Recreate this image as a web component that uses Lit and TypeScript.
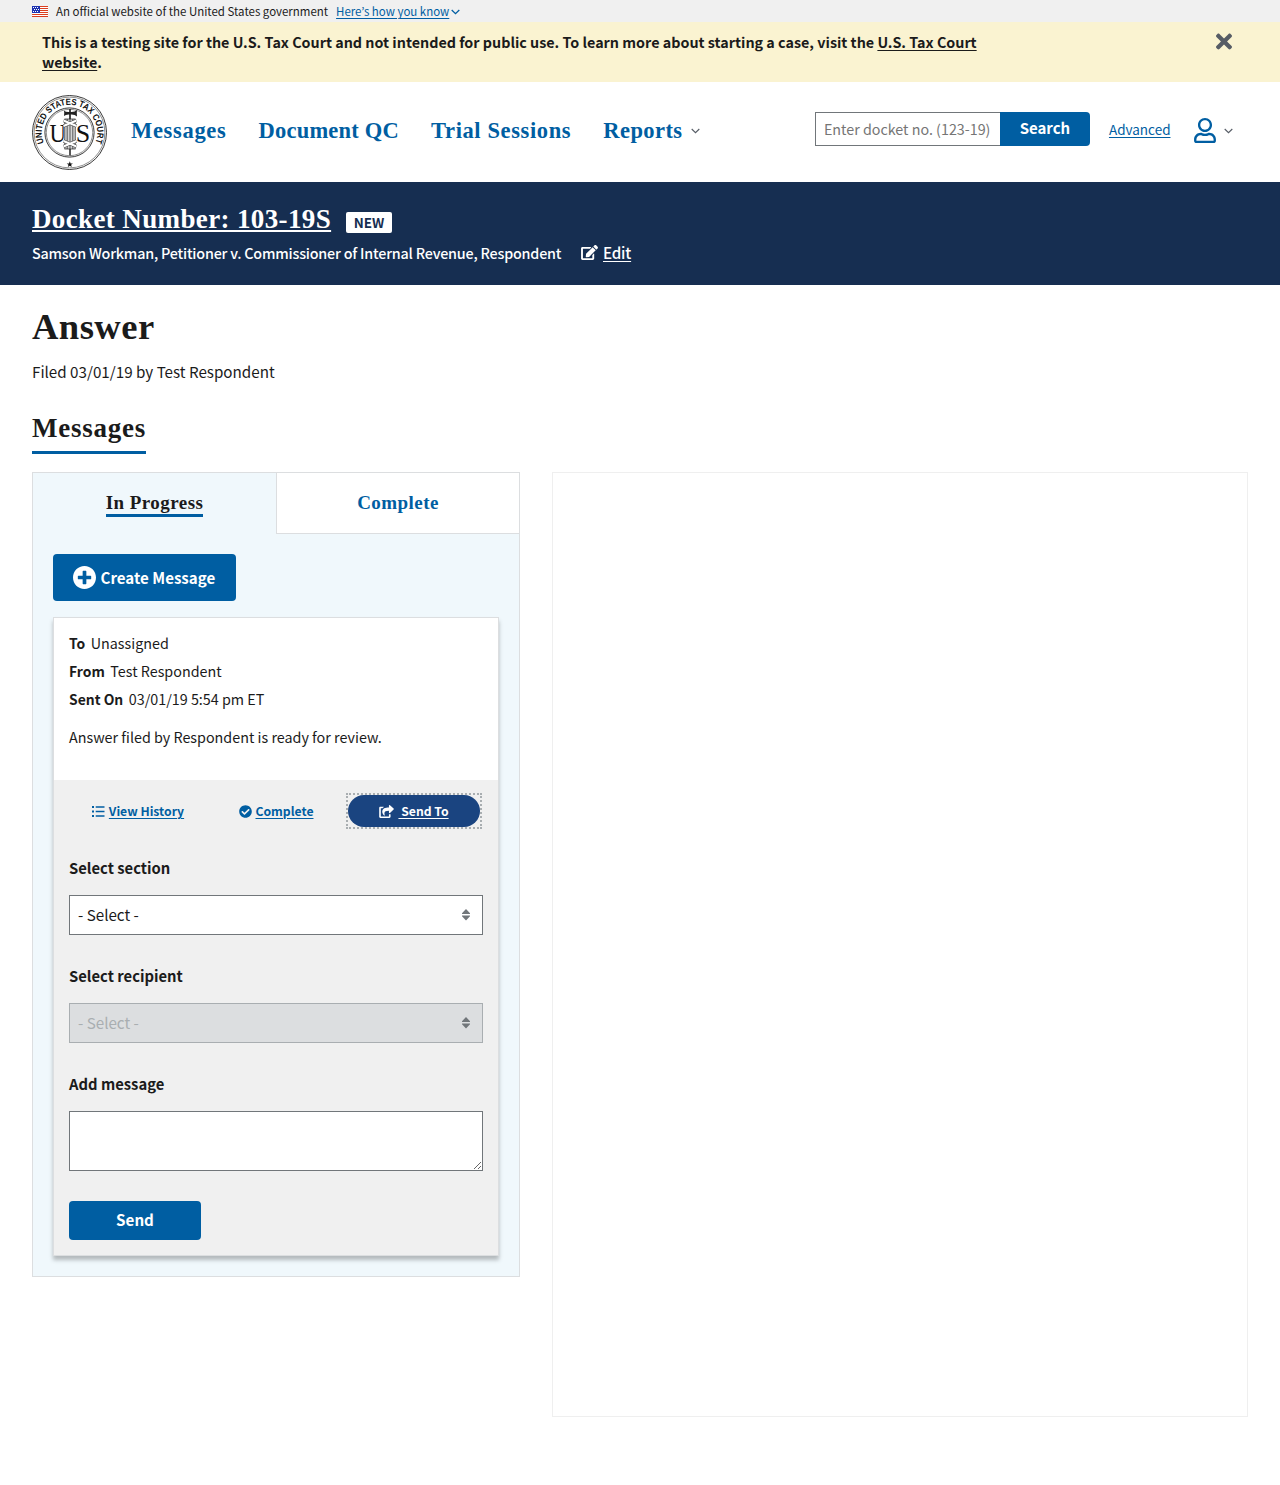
import { LitElement, html, svg, css } from "lit";
import { customElement } from "lit/decorators.js";

@customElement("app-root")
export class AppRoot extends LitElement {
  static styles = css`
    :host { display: block; background: #fff; color: #1b1b1b; min-height: 1485px;
      font-family: "Noto Sans CJK KR", "Open Sans", sans-serif; font-size: 15.2px; line-height: 20px; }
    * { box-sizing: border-box; }
    svg { display: block; flex: none; }
    h1, h2, p { margin: 0; }
    a { color: #005ea2; text-decoration: underline; text-decoration-thickness: 1px; text-underline-offset: 2px; }
    button, input, textarea { font: inherit; margin: 0; }
    .serif { font-family: "Liberation Serif", "Times New Roman", serif; font-weight: 700; }
    .gov { display: flex; align-items: center; height: 22px; padding: 0 32px; background: #f0f0f0; font-size: 11.47px; line-height: 22px; }
    .gov svg { margin: 2px 0 0; }
    .gov svg.flag { margin: 1px 8px 0 0; }
    .gov a { margin: 0 1.5px 0 8px; }
    .notice { display: flex; justify-content: space-between; height: 60px; padding: 10px 48px 0 42px; background: #faf3d1;
      font-size: 14.34px; font-weight: 700; line-height: 20px; }
    .notice svg { margin-top: 1px; }
    .notice p { width: 960px; }
    .notice a { color: inherit; }
    .header { display: flex; align-items: center; height: 100px; padding: 0 47.5px 2px 32px; }
    .seal { margin: 3px 24px 0 0; }
    .nav { display: flex; gap: 32.2px; color: #005ea2; font-size: 22.5px; line-height: 30px; letter-spacing: 0.42px; }
    .nav .wide { letter-spacing: 0.68px; }
    .nav .tight { letter-spacing: 0.2px; }
    .nav .mid { letter-spacing: 0.61px; }
    .reports { display: flex; align-items: center; gap: 8px; }
    .search { display: flex; margin: -4px 19px 0 auto; }
    .search input { width: 185px; height: 34px; border: 1px solid #71767a; border-right: 0; padding: 0 8px 1px; font-size: 14.3px; outline: 0; border-radius: 0; }
    .search input::placeholder { color: #757575; opacity: 1; }
    .btn { border: 0; background: #005ea2; color: #fff; border-radius: 4px; font-weight: 700; padding: 0; }
    .search .btn { width: 90px; height: 34px; border-radius: 0 4px 4px 0; padding-bottom: 2px; font-size: 15px; line-height: 32px; }
    .adv { font-size: 13.5px; margin: 0 23.5px 4px 0; }
    .user { display: flex; align-items: center; gap: 7.5px; }
    .user svg:first-child { margin-bottom: 2px; }
    .case { height: 103px; padding: 20px 32px 0; background: #162e51; color: #fff; }
    .case a { color: #fff; }
    .title { display: flex; gap: 15px; height: 34px; }
    .title a { font-size: 27px; line-height: 34px; letter-spacing: 0.37px; text-decoration-thickness: 2px; text-decoration-skip-ink: none; }
    .badge { width: 46px; height: 21px; margin-top: 10px; border-radius: 2px; background: #fff; color: #162e51; text-align: center; font-weight: 700; font-size: 13.4px; line-height: 21px; }
    .caption { display: flex; align-items: center; height: 22px; margin-top: 5px; line-height: 22px; font-weight: 500; letter-spacing: -0.2px; }
    .caption span { width: 530.5px; margin-top: 1px; font-size: 14.34px; white-space: nowrap; }
    .caption svg { margin: 0 5px 0 18.5px; }
    .main { padding: 20px 32px 0; }
    h1 { font-size: 36.6px; line-height: 44px; letter-spacing: 0.45px; }
    .filed { margin: 12px 0 27px; line-height: 21px; }
    h2 { width: 114px; font-size: 27px; line-height: 38px; letter-spacing: 0.75px; padding-bottom: 4px; border-bottom: 3px solid #005ea2; white-space: nowrap; }
    .cols { display: grid; grid-template-columns: 488px 696px; gap: 32px; margin-top: 18px; align-items: start; }
    .pane { height: 945px; border: 1px solid #efefef; }
    .panel { border: 1px solid #dcdee0; background: #f0f8fc; }
    .tabs { display: grid; grid-template-columns: 243px 243px; height: 61px; font-size: 19px; line-height: 23px; letter-spacing: 0.45px; }
    .tab { display: flex; justify-content: center; align-items: flex-start; padding-top: 18px; }
    .tab span { border-bottom: 3px solid #005ea2; }
    .tab.other { background: #fff; color: #005ea2; border: solid #dcdee0; border-width: 0 0 1px 1px; }
    .tab.other span { border: 0; }
    .body { padding: 20px; }
    .create { display: flex; align-items: center; width: 183px; height: 47px; padding-left: 20px; gap: 4.5px; font-size: 15.1px; }
    .create span { margin-bottom: 2px; }
    .card { margin-top: 16px; border: 1px solid #dcdee0; background: #fff; box-shadow: 0 4px 4px rgba(0, 0, 0, 0.25); }
    .info { height: 162px; padding: 11px 15px 0; font-size: 14.34px; line-height: 28px; }
    .info b { margin-right: 5.5px; font-size: 13.9px; }
    .info p { margin-top: 14px; line-height: 20px; }
    .form { background: #f0f0f0; padding: 15px; }
    .acts { display: grid; grid-template-columns: repeat(3, 138px); font-size: 12.2px; line-height: 32px; font-weight: 700; }
    .act { display: flex; align-items: center; justify-content: center; gap: 4px; height: 32px; }
    .focus { width: 132px; justify-self: center; outline: 2px dotted #a9aeb1; }
    .pill { border-radius: 16px; background: #1a4480; }
    .pill a { color: #fff; white-space: pre; }
    .label { display: block; margin: 31px 0 17px; font-weight: 700; font-size: 14.8px; }
    .select { display: flex; align-items: center; justify-content: space-between; height: 40px; padding: 0 12px 1px 8px; border: 1px solid #71767a; background: #fff; }
    .select span { margin-bottom: 1px; }
    .select.off { border-color: #a9aeb1; background: #dcdee0; color: #a9aeb1; }
    textarea { display: block; width: 414px; height: 60px; border: 1px solid #71767a; border-radius: 0; background: #fff; resize: both; outline: 0; }
    .send { display: block; width: 132px; height: 39px; margin-top: 30px; padding-bottom: 2px; font-size: 15.2px; line-height: 37px; }
    .sealtext { font: 700 9px "Liberation Sans", sans-serif; }
    .us { font: 26px "Liberation Serif", serif; }
  `;

  chevron(color: string, w = 1.1) {
    return html`<svg width="9" height="6" viewBox="0 0 9 6" fill="none" stroke=${color} stroke-width=${w}><path d="M.7 1 4.5 4.7 8.3 1" /></svg>`;
  }

  icon(d: string, w: number, h: number, box: string, color = "#fff") {
    return html`<svg width=${w} height=${h} viewBox=${box} fill=${color}><path d=${d} /></svg>`;
  }

  flag() {
    return html`<svg class="flag" width="16" height="11" viewBox="0 0 16 11">
      <rect width="16" height="11" fill="#fff" />
      ${[0, 2, 4, 6, 8, 10].map((y) => svg`<rect y=${y} width="16" height="1" fill="#db3e1f" />`)}
      <rect width="8" height="7" fill="#1e33b1" />
      ${[1, 3, 5].map((y) => [0, 1, 2].map((i) => svg`<rect x=${1 + i * 2 + (y === 3 ? 1 : 0)} y=${y} width="1" height="1" fill="#fff" />`))}
    </svg>`;
  }

  seal() {
    return html`<svg class="seal" width="75" height="75" viewBox="0 0 75 75" fill="none" stroke="#222">
      <circle cx="37.5" cy="37.5" r="37" stroke-width=".9" />
      <circle cx="37.5" cy="37.5" r="35.4" stroke-width=".5" />
      <circle cx="37.5" cy="37.5" r="24.6" stroke-width=".9" />
      <circle cx="37.5" cy="37.5" r="23.2" stroke-width=".5" />
      <path id="arc" d="M11.800 48A27.750 27.750 0 1 1 63.200 48" stroke="none" />
      <text class="sealtext" fill="#111" stroke="none"><textPath href="#arc" textLength="108" lengthAdjust="spacingAndGlyphs">UNITED STATES TAX COURT</textPath></text>
      <g class="us" fill="#111" stroke="none"><text x="17.5" y="47" textLength="16.5" lengthAdjust="spacingAndGlyphs">U</text><text x="43.8" y="47">S</text></g>
      <rect x="32.800" y="24" width="10.400" height="30" fill="#d4d4d4" stroke-width=".7" />
      <path d="M35.200 24v30M38 14v10M38 24v30M40.800 24v30" stroke-width=".7" />
      <path d="M31.500 25.500 44.500 31M44.500 25.500 31.500 31M31.500 46 44.500 51.500M44.500 46 31.500 51.500" stroke="#444" stroke-width="3.200" />
      <path d="M31.500 25.500 44.500 31M44.500 25.500 31.500 31M31.500 46 44.500 51.500M44.500 46 31.500 51.500" stroke="#fff" stroke-width="2" />
      <path d="M32 15.500q1.500 1.500 4.500 1.500h3q3.500 0 5.500-2-.5 3.500 0 6.500-2-2-5.500-2h-3q-3 0-4.500 1.500.5-3 0-5.500z" fill="#222" stroke="none" />
      <path d="M38 14v10M38 54v6.500" stroke-width="1.500" />
      <path d="m37.800 66.300.8 2.100h2.300l-1.800 1.400.7 2.200-2-1.300-2 1.300.7-2.200-1.800-1.400H37z" fill="#111" stroke="none" />
    </svg>`;
  }

  sorter() {
    return html`<svg width="8" height="12" viewBox="0 0 8 12" fill="#71767a"><path d="M4 0 8 4.200V5H0V4.200zM0 6.500h8v.8L4 11.500 0 7.300z" /></svg>`;
  }

  render() {
    return html`
      <div class="gov">${this.flag()}<span>An official website of the United States government</span><a>Here’s how you know</a>${this.chevron("#005ea2", 1.3)}</div>
      <div class="notice">
        <p>This is a testing site for the U.S. Tax Court and not intended for public use. To learn more about starting a case, visit the <a>U.S. Tax Court website</a>.</p>
        ${this.icon("M242.72 256l100.07-100.07c12.28-12.28 12.28-32.19 0-44.48l-22.24-22.24c-12.28-12.28-32.19-12.28-44.48 0L176 189.28 75.93 89.21c-12.28-12.28-32.19-12.28-44.48 0L9.21 111.45c-12.28 12.28-12.28 32.19 0 44.48L109.28 256 9.21 356.07c-12.28 12.28-12.28 32.19 0 44.48l22.24 22.24c12.28 12.28 32.2 12.28 44.48 0L176 322.72l100.07 100.07c12.28 12.28 32.2 12.28 44.48 0l22.24-22.24c12.28-12.28 12.28-32.19 0-44.48L242.72 256z", 16, 17, "0 80 352 352", "#565c65")}
      </div>
      <div class="header">
        ${this.seal()}
        <div class="nav serif"><span class="wide">Messages</span><span class="tight">Document QC</span><span class="mid">Trial Sessions</span><span class="reports"><span>Reports</span>${this.chevron("#565c65")}</span></div>
        <div class="search"><input placeholder="Enter docket no. (123-19)" /><button class="btn"><span>Search</span></button></div>
        <a class="adv">Advanced</a>
        <div class="user">${this.icon("M313.6 304c-28.7 0-42.5 16-89.6 16-47.1 0-60.8-16-89.6-16C60.2 304 0 364.2 0 438.4V464c0 26.5 21.5 48 48 48h352c26.5 0 48-21.500 48-48v-25.600c0-74.200-60.200-134.400-134.400-134.400zM400 464H48v-25.600c0-47.600 38.800-86.400 86.400-86.400 14.600 0 38.300 16 89.600 16 51.700 0 74.900-16 89.600-16 47.600 0 86.400 38.800 86.400 86.400V464zM224 288c79.500 0 144-64.500 144-144S303.500 0 224 0 80 64.500 80 144s64.500 144 144 144zm0-240c52.900 0 96 43.100 96 96s-43.100 96-96 96-96-43.100-96-96 43.100-96 96-96z", 22, 25, "0 0 448 512", "#005ea2")}${this.chevron("#565c65")}</div>
      </div>
      <div class="case">
        <div class="title"><a class="serif">Docket Number: 103-19S</a><span class="badge">NEW</span></div>
        <div class="caption"><span>Samson Workman, Petitioner v. Commissioner of Internal Revenue, Respondent</span>
          ${this.icon("M402.6 83.2l90.2 90.2c3.8 3.8 3.8 10 0 13.8L274.4 405.6l-92.8 10.3c-12.4 1.4-22.9-9.1-21.5-21.5l10.3-92.8L388.8 83.2c3.8-3.8 10-3.8 13.8 0zm162-22.9l-48.800-48.800c-15.200-15.200-39.900-15.200-55.200 0l-35.400 35.400c-3.800 3.800-3.800 10 0 13.800l90.200 90.200c3.800 3.800 10 3.800 13.800 0l35.400-35.400c15.200-15.300 15.200-40 0-55.200zM384 346.200V448H64V128h229.800c3.200 0 6.200-1.300 8.500-3.500l40-40c7.600-7.600 2.200-20.500-8.500-20.500H48C21.500 64 0 85.500 0 112v352c0 26.500 21.500 48 48 48h352c26.500 0 48-21.500 48-48V306.200c0-10.700-12.900-16-20.500-8.500l-40 40c-2.200 2.300-3.500 5.300-3.500 8.500z", 17, 15, "0 0 576 512")}<a>Edit</a></div>
      </div>
      <div class="main">
        <h1 class="serif">Answer</h1>
        <p class="filed">Filed 03/01/19 by Test Respondent</p>
        <h2 class="serif">Messages</h2>
        <div class="cols">
          <div class="panel">
            <div class="tabs serif"><div class="tab"><span>In Progress</span></div><div class="tab other"><span>Complete</span></div></div>
            <div class="body">
              <button class="btn create">${this.icon("M256 8C119 8 8 119 8 256s111 248 248 248 248-111 248-248S393 8 256 8zm144 276c0 6.600-5.400 12-12 12h-92v92c0 6.600-5.400 12-12 12h-56c-6.600 0-12-5.400-12-12v-92h-92c-6.600 0-12-5.400-12-12v-56c0-6.600 5.400-12 12-12h92v-92c0-6.600 5.400-12 12-12h56c6.600 0 12 5.400 12 12v92h92c6.600 0 12 5.400 12 12v56z", 23, 23, "8 8 496 496")}<span>Create Message</span></button>
              <div class="card">
                <div class="info">
                  <div><b>To</b><span>Unassigned</span></div>
                  <div><b>From</b><span>Test Respondent</span></div>
                  <div><b>Sent On</b><span>03/01/19 5:54 pm ET</span></div>
                  <p>Answer filed by Respondent is ready for review.</p>
                </div>
                <div class="form">
                  <div class="acts">
                    <div class="act"><svg width="13" height="11" viewBox="0 0 13 11" fill="#005ea2"><path d="M0 0h2v2H0zM0 4.500h2v2H0zM0 9h2v2H0zM3.700.3H12.500v1.400H3.700zM3.700 4.800H12.500v1.400H3.700zM3.700 9.300H12.500v1.400H3.700z" /></svg><a>View History</a></div>
                    <div class="act">${this.icon("M504 256c0 136.967-111.033 248-248 248S8 392.967 8 256 119.033 8 256 8s248 111.033 248 248zM227.314 387.314l184-184c6.248-6.248 6.248-16.379 0-22.627l-22.627-22.627c-6.248-6.249-16.379-6.249-22.628 0L216 308.118l-70.059-70.059c-6.248-6.248-16.379-6.248-22.628 0l-22.627 22.627c-6.248 6.248-6.248 16.379 0 22.627l104 104c6.249 6.249 16.379 6.249 22.628.001z", 13, 13, "0 0 512 512", "#005ea2")}<a>Complete</a></div>
                    <div class="focus"><div class="act pill">${this.icon("M568.482 177.448L424.479 313.433C409.300 327.768 384 317.140 384 295.985v-71.963c-144.575.970-205.566 35.113-164.775 171.353 4.483 14.973-12.846 26.567-25.006 17.330C155.252 383.105 120 326.488 120 269.339c0-143.937 117.599-172.500 264-173.312V24.012c0-21.174 25.317-31.768 40.479-17.448l144.003 135.988c10.020 9.463 10.028 25.425 0 34.896zM384 379.128V448H64V128h50.916a11.990 11.990 0 0 0 8.648-3.693c14.953-15.568 32.237-27.890 51.014-37.676C185.708 80.830 181.584 64 169.033 64H48C21.490 64 0 85.490 0 112v352c0 26.510 21.490 48 48 48h352c26.510 0 48-21.490 48-48v-88.806c0-8.288-8.197-14.066-16.011-11.302a71.830 71.830 0 0 1-34.189 3.377c-7.270-1.046-13.800 4.514-13.800 11.859z", 15, 13, "0 0 576 512")}<a> Send To</a></div></div>
                  </div>
                  <label class="label">Select section</label>
                  <div class="select"><span>- Select -</span>${this.sorter()}</div>
                  <label class="label">Select recipient</label>
                  <div class="select off"><span>- Select -</span>${this.sorter()}</div>
                  <label class="label">Add message</label>
                  <textarea></textarea>
                  <button class="btn send"><span>Send</span></button>
                </div>
              </div>
            </div>
          </div>
          <div class="pane"></div>
        </div>
      </div>
    `;
  }
}
